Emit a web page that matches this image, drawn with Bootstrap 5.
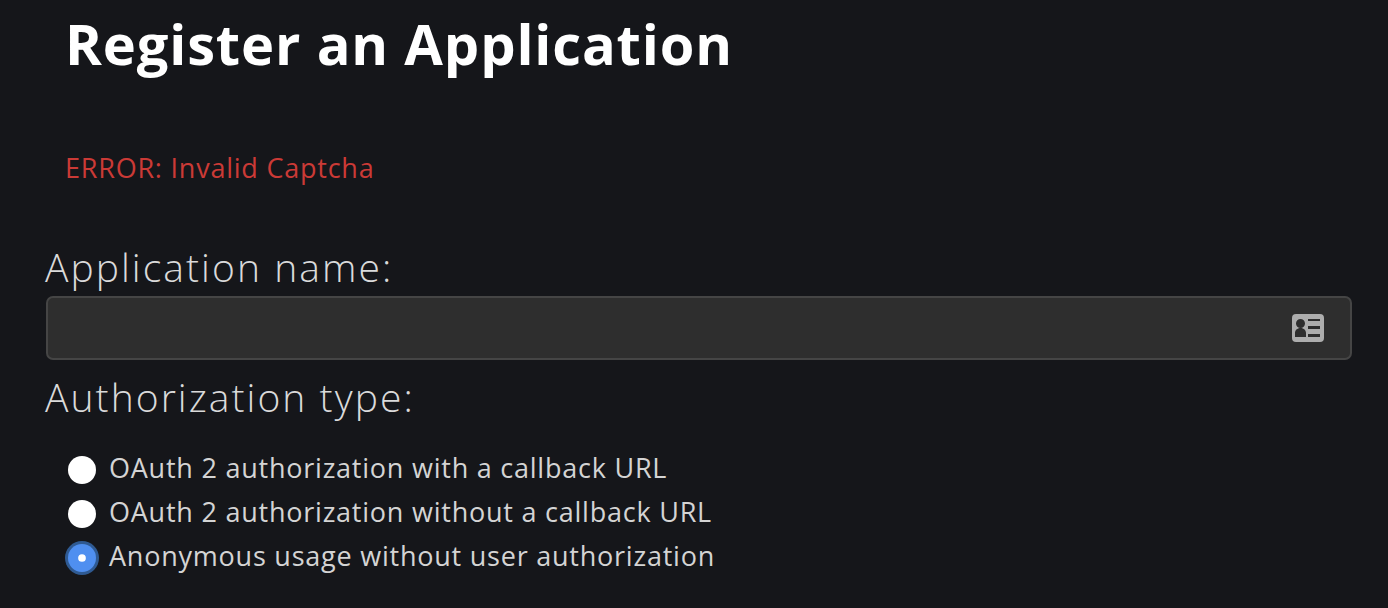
<!DOCTYPE html>
<html lang="en">
<head>
<meta charset="utf-8">
<title>Register an Application</title>
<link href="https://cdn.jsdelivr.net/npm/bootstrap@5.3.0/dist/css/bootstrap.min.css" rel="stylesheet">
<style>
html,body{height:608px;overflow:hidden}
body{background:#15161a;font-family:"Open Sans","Noto Sans",sans-serif;color:#d4d4d4}
.pagewrap{padding:0 36px 0 45px}
.apptitle{font-family:"Open Sans",sans-serif;font-weight:700;font-size:56px;line-height:76px;letter-spacing:.85px;color:#fff;margin:5px 0 0 20px}
.apperr{font-size:27px;line-height:36px;letter-spacing:.77px;color:#cb3a36;margin:69px 0 0 20px}
.biglabel{font-weight:300;font-size:39px;line-height:52px;letter-spacing:2.05px;color:#dadada;margin:0}
.firstlabel{margin-top:55px;height:55px}
.secondlabel{margin-top:11px}
.inputbox{position:relative;margin-left:1px}
.inputbox .form-control{height:64px;background:#2e2e2e;border:2px solid #454545;border-radius:7px;box-shadow:none;color:#ddd}
.cardicon{position:absolute;right:28px;top:18px;width:32px;height:28px}
.radiolist{margin:24px 0 0 21px}
.radiorow{display:flex;align-items:center;height:44px;margin:0;padding:0}
.radiorow .form-check-input{width:28px;height:28px;margin:2px 13px 0 2px;flex:none;background-color:#fff;border:0;float:none;filter:blur(.5px)}
.radiorow .form-check-input:checked{background-color:#4f8ff0;box-shadow:0 0 0 3px #2f5a92;background-size:28px 28px;filter:none;background-image:url("data:image/svg+xml,%3csvg xmlns='http://www.w3.org/2000/svg' viewBox='-4 -4 8 8'%3e%3ccircle r='1.100' fill='%23fff'/%3e%3c/svg%3e")}
.radiorow .form-check-label{font-size:27px;line-height:36px;letter-spacing:.77px;color:#d4d4d4;position:relative;top:-1px}
</style>
</head>
<body>
<div class="pagewrap">
  <h1 class="apptitle">Register an Application</h1>
  <p class="apperr">ERROR: Invalid Captcha</p>
  <form>
    <label class="biglabel firstlabel d-block" for="appname">Application name:</label>
    <div class="inputbox">
      <input class="form-control" id="appname" type="text">
      <svg class="cardicon" viewBox="0 0 32 28" aria-hidden="true">
        <path fill="#adadad" fill-rule="evenodd" d="M4 0h24a4 4 0 0 1 4 4v20a4 4 0 0 1-4 4H4a4 4 0 0 1-4-4V4a4 4 0 0 1 4-4zM16 5v2h12V5zm0 7v3h12v-3zm0 8v3h12v-3zM8.500 5a4.500 4.500 0 1 0 0 9 4.500 4.500 0 0 0 0-9zM3 23h11v-4c0-2.500-2-5-5.500-5S3 16.500 3 19z"/>
      </svg>
    </div>
    <p class="biglabel secondlabel">Authorization type:</p>
    <div class="radiolist">
      <div class="radiorow form-check"><input class="form-check-input" type="radio" name="authtype" id="r1"><label class="form-check-label" for="r1">OAuth 2 authorization with a callback URL</label></div>
      <div class="radiorow form-check"><input class="form-check-input" type="radio" name="authtype" id="r2"><label class="form-check-label" for="r2">OAuth 2 authorization without a callback URL</label></div>
      <div class="radiorow form-check"><input class="form-check-input" type="radio" name="authtype" id="r3" checked><label class="form-check-label" for="r3">Anonymous usage without user authorization</label></div>
    </div>
  </form>
</div>
<script src="https://cdn.jsdelivr.net/npm/bootstrap@5.3.0/dist/js/bootstrap.bundle.min.js"></script>
</body>
</html>
